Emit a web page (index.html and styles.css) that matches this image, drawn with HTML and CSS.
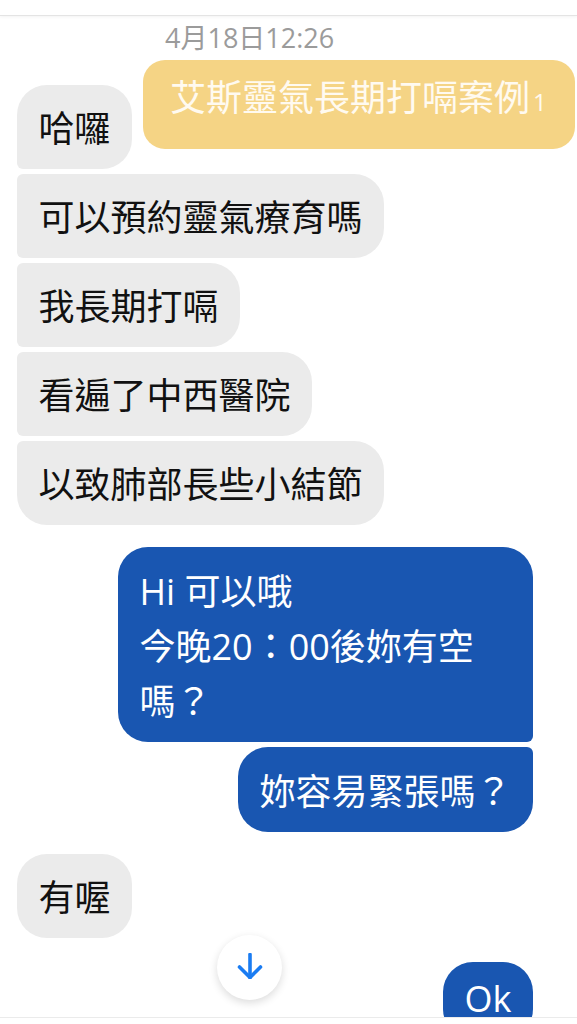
FILE: index.html
```html
<!DOCTYPE html>
<html lang="zh-Hant">
<head>
<meta charset="utf-8">
<title>Chat</title>
<link rel="stylesheet" href="styles.css">
</head>
<body>
<div class="screen">
  <div class="topbar"></div>
  <div class="chat">
    <div class="stamp">4月18日12:26</div>
    <div class="group in">
      <div class="bubble">哈囉</div>
      <div class="bubble">可以預約靈氣療育嗎</div>
      <div class="bubble">我長期打嗝</div>
      <div class="bubble">看遍了中西醫院</div>
      <div class="bubble">以致肺部長些小結節</div>
    </div>
    <div class="group out">
      <div class="bubble">Hi 可以哦<br>今晚20：00後妳有空嗎？</div>
      <div class="bubble">妳容易緊張嗎？</div>
    </div>
    <div class="group in">
      <div class="bubble">有喔</div>
    </div>
    <div class="group out last">
      <div class="bubble">Ok</div>
    </div>
  </div>
  <div class="pinned">艾斯靈氣長期打嗝案例<span class="num">1</span></div>
  <button class="jump" type="button" aria-label="scroll down">
    <svg width="26" height="26" viewBox="0 0 26 26" fill="none" stroke="#1a7cf2" stroke-width="3.6" stroke-linecap="round" stroke-linejoin="round">
      <path d="M13 1.5V24.5"/>
      <path d="M2.5 14L13 24.5L23.5 14"/>
    </svg>
  </button>
  <div class="bottombar"></div>
</div>
</body>
</html>
```

FILE: styles.css
```css
html, body {
  margin: 0;
  padding: 0;
  background: #ffffff;
}

.screen {
  position: relative;
  width: 577px;
  height: 1024px;
  overflow: hidden;
  background: #ffffff;
  font-family: "Open Sans", "Noto Sans CJK TC", sans-serif;
}

.topbar {
  height: 15px;
  border-bottom: 1px solid #e4e4e4;
  box-shadow: 0 1px 3px rgba(0, 0, 0, 0.05);
}

.chat {
  display: flex;
  flex-direction: column;
  gap: 22px;
  padding: 0 44px 0 17px;
}

.stamp {
  margin: 4px 0 7px 148px;
  font-size: 27px;
  line-height: 36px;
  color: #9b9b9b;
}

.group {
  display: flex;
  flex-direction: column;
  gap: 5px;
}

.group.in {
  align-items: flex-start;
}

.group.out {
  align-items: flex-end;
}

.group.last {
  margin-top: 2px;
}

.bubble {
  box-sizing: border-box;
  max-width: 415px;
  padding: 17px 21.5px 13px;
  font-size: 36px;
  line-height: 54px;
}

.in .bubble {
  background: #ebebeb;
  color: #111111;
  border-radius: 6px 30px 30px 6px;
}

.in .bubble:first-child {
  border-top-left-radius: 30px;
}

.in .bubble:last-child {
  border-bottom-left-radius: 30px;
}

.out .bubble {
  background: #1956b1;
  color: #ffffff;
  line-height: 55px;
  border-radius: 30px 6px 6px 30px;
}

.out .bubble:first-child {
  border-top-right-radius: 30px;
}

.out .bubble:last-child {
  border-bottom-right-radius: 30px;
}

.group.last .bubble {
  padding-top: 9px;
}

.pinned {
  position: absolute;
  left: 143px;
  top: 60px;
  width: 432px;
  height: 89px;
  box-sizing: border-box;
  padding: 11px 0 0 27px;
  background: #f5d485;
  border-radius: 22px;
  color: #fffaf0;
  font-size: 36px;
  line-height: 54px;
}

.pinned .num {
  font-size: 24px;
  margin-left: 3px;
}

.jump {
  position: absolute;
  left: 217px;
  top: 935px;
  width: 65px;
  height: 65px;
  padding: 0;
  border: none;
  border-radius: 50%;
  background: #ffffff;
  box-shadow: 0 3px 9px rgba(0, 0, 0, 0.14);
  display: flex;
  align-items: center;
  justify-content: center;
}

.jump svg {
  margin-bottom: 4px;
}

.bottombar {
  position: absolute;
  left: 0;
  right: 0;
  top: 1017px;
  bottom: 0;
  background: #ffffff;
  border-top: 1px solid #ebebeb;
}
```
